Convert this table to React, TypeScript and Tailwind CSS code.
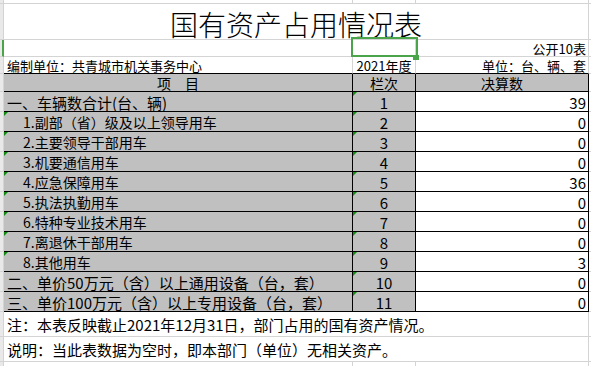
import React from 'react';

type R = { label: string; indent: boolean; n: number; v: number };

const rows: R[] = [
  { label: '一、车辆数合计(台、辆)', indent: false, n: 1, v: 39 },
  { label: '1.副部（省）级及以上领导用车', indent: true, n: 2, v: 0 },
  { label: '2.主要领导干部用车', indent: true, n: 3, v: 0 },
  { label: '3.机要通信用车', indent: true, n: 4, v: 0 },
  { label: '4.应急保障用车', indent: true, n: 5, v: 36 },
  { label: '5.执法执勤用车', indent: true, n: 6, v: 0 },
  { label: '6.特种专业技术用车', indent: true, n: 7, v: 0 },
  { label: '7.离退休干部用车', indent: true, n: 8, v: 0 },
  { label: '8.其他用车', indent: true, n: 9, v: 3 },
  { label: '二、单价50万元（含）以上通用设备（台，套）', indent: false, n: 10, v: 0 },
  { label: '三、单价100万元（含）以上专用设备（台，套）', indent: false, n: 11, v: 0 },
];

function Tri() {
  return (
    <span className="absolute left-0 top-0 w-0 h-0 border-t-[4px] border-r-[4px] border-t-[#108a10] border-r-transparent" />
  );
}

function Stub({ green = false }: { green?: boolean }) {
  return (
    <div
      className={
        green
          ? 'w-[4px] shrink-0 bg-[#e9e9e9] border-r-2 border-r-[#4aa54a] border-b border-b-[#d4d4d4]'
          : 'w-[4px] shrink-0 bg-[#e9e9e9] border-r border-b border-[#d4d4d4]'
      }
    />
  );
}

export default function App() {
  return (
    <div className="relative w-[591px] h-[366px] overflow-hidden bg-white text-black font-['Noto_Sans_CJK_SC',sans-serif] leading-none">
      {/* row 0 (partially visible) */}
      <div className="flex h-[4px]">
        <Stub />
        <div className="w-[349px] border-r border-b border-[#d4d4d4]" />
        <div className="w-[63px] border-r border-b border-[#d4d4d4]" />
        <div className="w-[173px] border-r border-b border-[#d4d4d4]" />
        <div className="flex-1 border-b border-[#d4d4d4]" />
      </div>
      {/* title */}
      <div className="flex h-[36px]">
        <Stub />
        <div className="w-[585px] border-r border-b border-[#d4d4d4] flex items-center justify-center pt-[4px] text-[28px] font-light">
          国有资产占用情况表
        </div>
        <div className="flex-1 border-b border-[#d4d4d4]" />
      </div>
      {/* row 2 */}
      <div className="flex h-[17px]">
        <Stub green />
        <div className="w-[349px] border-r border-b border-[#d4d4d4]" />
        <div className="w-[63px] border-r border-b border-[#d4d4d4]" />
        <div className="w-[173px] border-r border-b border-[#d4d4d4] flex items-center justify-end pr-[2px] text-[13px] overflow-hidden">
          公开10表
        </div>
        <div className="flex-1 border-b border-[#d4d4d4]" />
      </div>
      {/* row 3 */}
      <div className="flex h-[17px]">
        <Stub />
        <div className="w-[349px] border-r border-[#d4d4d4] border-b border-b-black flex items-center pl-[3px] text-[13px] whitespace-nowrap overflow-hidden">
          编制单位：共青城市机关事务中心
        </div>
        <div className="w-[63px] border-r border-[#d4d4d4] border-b border-b-black flex items-center justify-center text-[13px] overflow-hidden">
          2021年度
        </div>
        <div className="w-[173px] border-r border-[#d4d4d4] border-b border-b-black flex items-center justify-end pr-[2px] text-[13px] overflow-hidden">
          单位：台、辆、套
        </div>
        <div className="flex-1 border-b border-[#d4d4d4]" />
      </div>
      {/* header */}
      <div className="flex h-[18px]">
        <Stub />
        <div className="w-[349px] bg-[#c0c0c0] border-r border-b border-black flex items-center justify-center text-[14px] overflow-hidden">
          项　目
        </div>
        <div className="w-[63px] bg-[#c0c0c0] border-r border-b border-black flex items-center justify-center text-[14px] overflow-hidden">
          栏次
        </div>
        <div className="w-[173px] bg-[#c0c0c0] border-r border-b border-black flex items-center justify-center text-[14px] overflow-hidden">
          决算数
        </div>
        <div className="flex-1 border-b border-[#d4d4d4]" />
      </div>
      {/* data rows */}
      {rows.map((r) => (
        <div key={r.n} className="flex h-[20px]">
          <Stub />
          <div
            className={
              r.indent
                ? 'relative w-[349px] bg-[#c0c0c0] border-r border-b border-black flex items-center pl-[19px] pt-[1px] text-[14px] whitespace-nowrap'
                : 'relative w-[349px] bg-[#c0c0c0] border-r border-b border-black flex items-center pl-[3px] pt-[1px] text-[15px] whitespace-nowrap'
            }
          >
            {r.indent && <Tri />}
            {r.label}
          </div>
          <div className="relative w-[63px] bg-[#c0c0c0] border-r border-b border-black flex items-center justify-center pt-[1px] text-[15px]">
            <Tri />
            {r.n}
          </div>
          <div className="w-[173px] bg-white border-r border-b border-black flex items-center justify-end pr-[2px] pt-[1px] text-[15px]">
            {r.v}
          </div>
          <div className="flex-1 border-b border-[#d4d4d4]" />
        </div>
      ))}
      {/* notes */}
      <div className="flex h-[25px]">
        <Stub />
        <div className="w-[585px] border-r border-b border-[#d4d4d4] flex items-center pl-[3px] text-[15px] whitespace-nowrap">
          注：本表反映截止2021年12月31日，部门占用的国有资产情况。
        </div>
        <div className="flex-1 border-b border-[#d4d4d4]" />
      </div>
      <div className="flex h-[25px]">
        <Stub />
        <div className="w-[585px] border-r border-b border-[#d4d4d4] flex items-center pl-[3px] text-[15px] whitespace-nowrap">
          说明：当此表数据为空时，即本部门（单位）无相关资产。
        </div>
        <div className="flex-1 border-b border-[#d4d4d4]" />
      </div>
      <div className="flex h-[20px]">
        <Stub />
        <div className="w-[349px] border-r border-b border-[#d4d4d4]" />
        <div className="w-[63px] border-r border-b border-[#d4d4d4]" />
        <div className="w-[173px] border-r border-b border-[#d4d4d4]" />
        <div className="flex-1 border-b border-[#d4d4d4]" />
      </div>

      {/* selected cell */}
      <div className="absolute left-[351px] top-[37px] w-[67px] h-[20px] border-2 border-[#4aa54a]">
        <div className="absolute -right-[3px] -bottom-[5px] w-[6px] h-[5px] bg-[#4aa54a]" />
      </div>
    </div>
  );
}
